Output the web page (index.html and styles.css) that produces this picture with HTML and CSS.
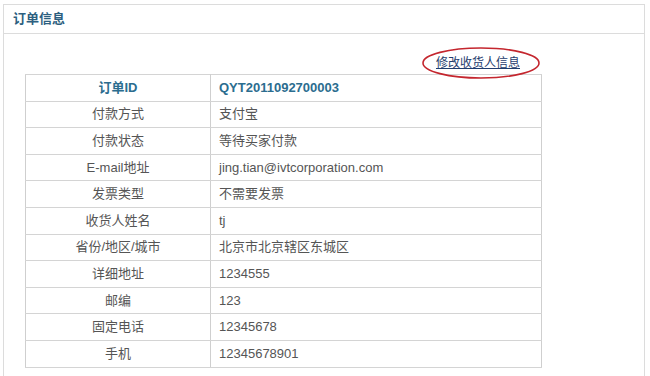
FILE: index.html
```html
<!DOCTYPE html>
<html lang="zh-CN">
<head>
<meta charset="utf-8">
<title>订单信息</title>
<link rel="stylesheet" href="styles.css">
</head>
<body>
<div class="panel">
  <div class="panel-head">订单信息</div>
  <div class="panel-body">
    <div class="link-row">
      <span class="link-wrap">
        <a class="edit-link" href="#">修改收货人信息</a>
        <svg class="ring" width="120" height="34" viewBox="0 0 120 34"><ellipse cx="60" cy="17" rx="58" ry="15" fill="none" stroke="#c4262e" stroke-width="1.6"/></svg>
      </span>
    </div>
    <table class="info">
      <tr class="head"><td class="k">订单ID</td><td class="v">QYT2011092700003</td></tr>
      <tr><td class="k">付款方式</td><td class="v">支付宝</td></tr>
      <tr><td class="k">付款状态</td><td class="v">等待买家付款</td></tr>
      <tr><td class="k">E-mail地址</td><td class="v">jing.tian@ivtcorporation.com</td></tr>
      <tr><td class="k">发票类型</td><td class="v">不需要发票</td></tr>
      <tr><td class="k">收货人姓名</td><td class="v">tj</td></tr>
      <tr><td class="k">省份/地区/城市</td><td class="v">北京市北京辖区东城区</td></tr>
      <tr><td class="k">详细地址</td><td class="v">1234555</td></tr>
      <tr><td class="k">邮编</td><td class="v">123</td></tr>
      <tr><td class="k">固定电话</td><td class="v">12345678</td></tr>
      <tr><td class="k">手机</td><td class="v">12345678901</td></tr>
    </table>
  </div>
</div>
</body>
</html>
```

FILE: styles.css
```css
html, body {
  margin: 0;
  padding: 0;
  background: #ffffff;
}
body {
  font-family: "Liberation Sans", Arial, "Noto Sans CJK SC", sans-serif;
  font-size: 13px;
  color: #555555;
}
.panel {
  margin: 4px 5px 0 3px;
  border: 1px solid #dcdcdc;
  border-bottom: none;
  height: 372px;
  box-sizing: border-box;
}
.panel-head {
  height: 28px;
  line-height: 27px;
  padding-left: 9px;
  border-bottom: 1px solid #dcdcdc;
  color: #2d5f80;
  font-size: 13px;
  font-weight: bold;
}
.panel-body {
  padding: 0 0 0 21px;
}
.link-row {
  width: 517px;
  height: 40px;
  display: flex;
  justify-content: flex-end;
  align-items: flex-start;
  padding-right: 22px;
  box-sizing: border-box;
}
.link-wrap {
  position: relative;
  margin-top: 21px;
  line-height: 16px;
}
.edit-link {
  font-size: 12px;
  color: #1f3d6e;
  text-decoration: underline;
}
.ring {
  position: absolute;
  left: -15px;
  top: -9px;
  pointer-events: none;
}
.info {
  width: 517px;
  border-collapse: collapse;
  border: 1px solid #cfcfcf;
}
.info td {
  border-top: 1px solid #d4d4d4;
  border-bottom: 1px solid #d4d4d4;
  height: 25.6px;
  padding: 0;
  line-height: 16px;
}
.info .k {
  width: 184px;
  text-align: center;
  border-right: 1px solid #cfcfcf;
}
.info .v {
  padding-left: 8px;
}
.info .head td {
  color: #2b6d8f;
  font-weight: bold;
}
```
